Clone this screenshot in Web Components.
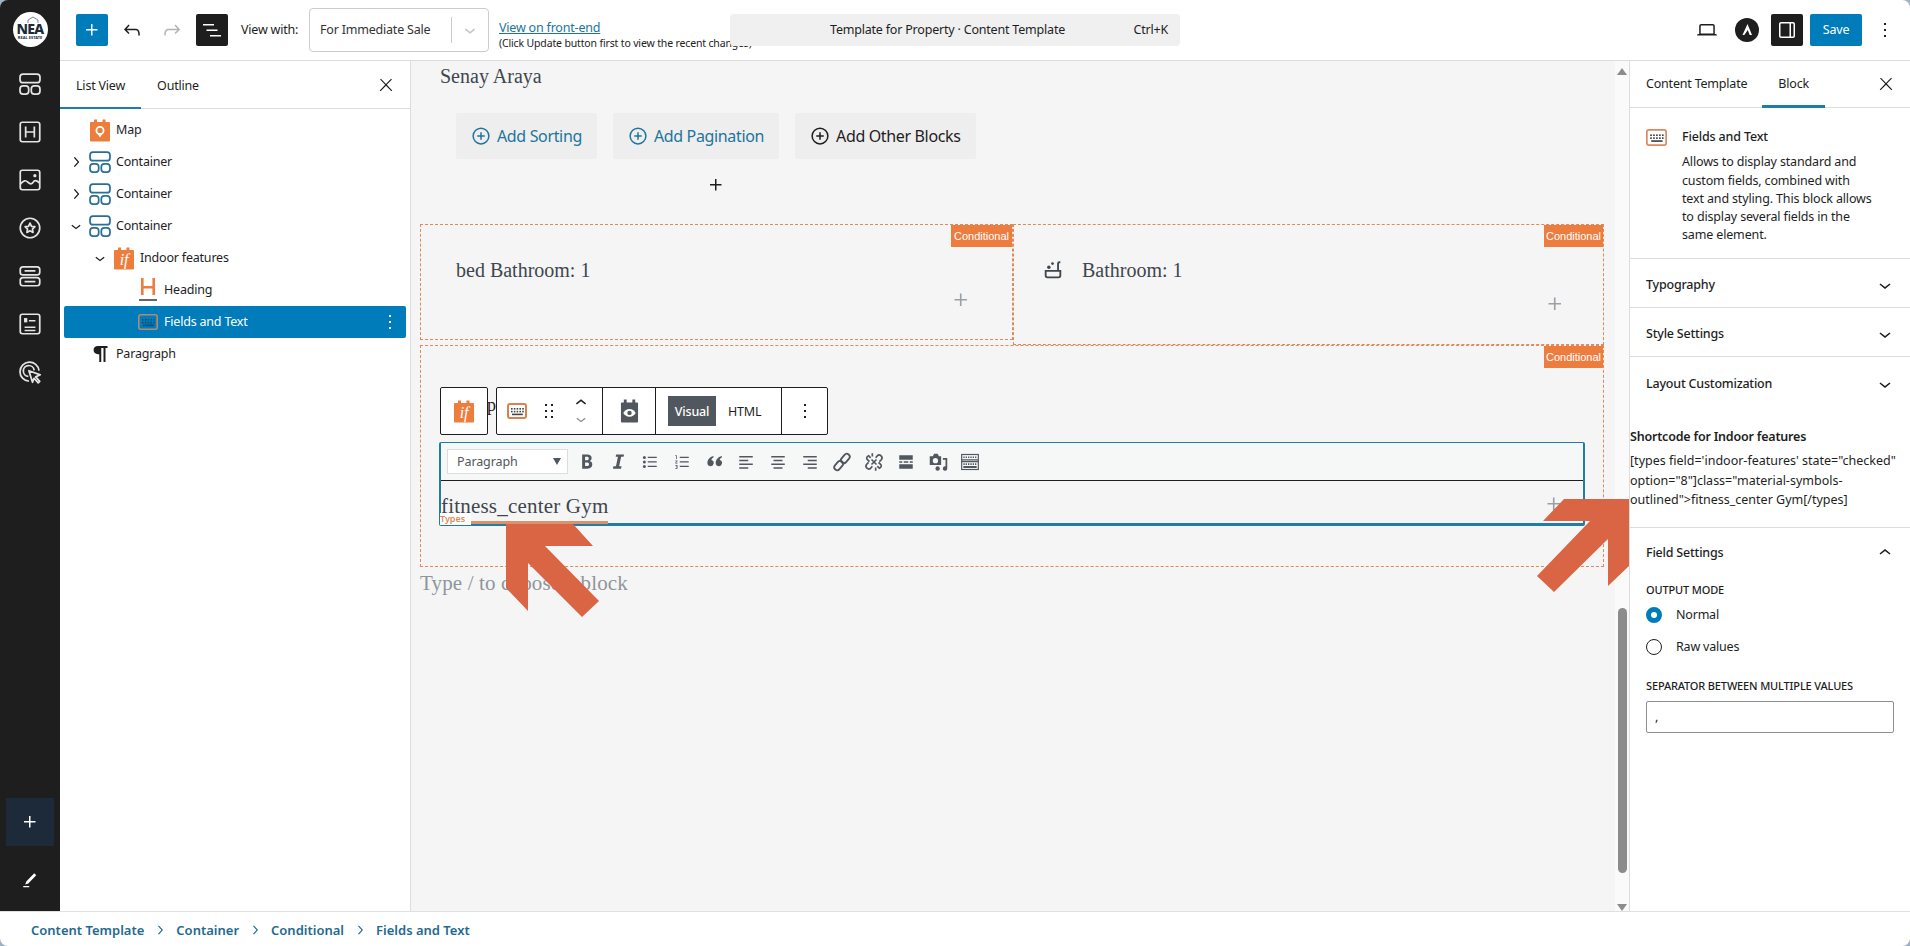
<!DOCTYPE html>
<html lang="en">
<head>
<meta charset="utf-8">
<title>Template for Property</title>
<style>
    html, body { margin: 0; height: 100%; overflow: hidden; background: #9fb3c4; }
    body { font: 12.5px/1.4 "Noto Sans", sans-serif; letter-spacing: -.2px; color: #1e1e1e; }
</style>
</head>
<body>
<editor-app></editor-app>

<script>
const UI_FONT = '"Noto Sans", "Open Sans", sans-serif';
const SERIF_FONT = '"Liberation Serif", "DejaVu Serif", serif';

const toolsetBody = (inner) => `<svg viewBox="0 0 20 24" width="20" height="24"><path fill="#ec7d3c" d="M4 4V1.500h3V4h5.500V1.500h3V4H19a1 1 0 0 1 1 1v17.500a1 1 0 0 1-1 1H1a1 1 0 0 1-1-1V5a1 1 0 0 1 1-1z"/>${inner}</svg>`;

const keyboardGrid = (c) => `<g fill="${c}"><rect x="4" y="5" width="1.600" height="1.600"/><rect x="6.800" y="5" width="1.600" height="1.600"/><rect x="9.600" y="5" width="1.600" height="1.600"/><rect x="12.400" y="5" width="1.600" height="1.600"/><rect x="15.200" y="5" width="1.600" height="1.600"/><rect x="4" y="7.800" width="1.600" height="1.600"/><rect x="6.800" y="7.800" width="1.600" height="1.600"/><rect x="9.600" y="7.800" width="1.600" height="1.600"/><rect x="12.400" y="7.800" width="1.600" height="1.600"/><rect x="15.200" y="7.800" width="1.600" height="1.600"/><rect x="5" y="10.600" width="10.800" height="1.600"/></g>`;

const ICONS = {
    plus: '<path fill="currentColor" d="M11 12.500V17.500H12.500V12.500H17.500V11H12.500V6H11V11H6V12.500H11Z"/>',
    undo: '<path fill="currentColor" d="M18.300 11.700c-.6-.6-1.400-.9-2.300-.9H6.700l2.900-3.300-1.100-1-4.500 5L8.500 16l1-1-2.700-2.700H16c.5 0 .9.2 1.300.5 1 1 1 3.400 1 4.500v.3h1.500v-.2c0-1.500 0-4.300-1.500-5.700z"/>',
    redo: '<path fill="currentColor" d="M15.600 6.500l-1.100 1 2.900 3.300H8c-.9 0-1.700.3-2.300.9-1.400 1.500-1.400 4.200-1.400 5.600v.2h1.500v-.3c0-1.100 0-3.500 1-4.500.3-.3.7-.5 1.300-.5h9.200L14.500 15l1.100 1.100 4.600-4.600-4.600-5z"/>',
    listview: '<path fill="currentColor" d="M3 6h11v1.500H3V6Zm3.500 5.500h11V13h-11v-1.500ZM21 17H10v1.500h11V17Z"/>',
    down: '<path fill="currentColor" d="M17.500 11.600L12 16l-5.500-4.400.9-1.200L12 14l4.500-3.600 1 1.200z"/>',
    up: '<path fill="currentColor" d="M6.500 12.400L12 8l5.500 4.400-.9 1.200L12 10l-4.500 3.600-1-1.200z"/>',
    right: '<path fill="currentColor" d="M10.600 6L9.400 7l4.600 5-4.600 5 1.200 1 5.400-6z"/>',
    close: '<path fill="currentColor" d="M13 11.800l6.100-6.300-1-1-6.100 6.200-6.100-6.200-1 1 6.100 6.300-6.500 6.700 1 1 6.500-6.600 6.500 6.600 1-1z"/>',
    more: '<path fill="currentColor" d="M13 19h-2v-2h2v2zm0-6h-2v-2h2v2zm0-6h-2V5h2v2z"/>',
    drag: '<path fill="currentColor" d="M8 7h2V5H8v2zm0 6h2v-2H8v2zm0 6h2v-2H8v2zm6-14v2h2V5h-2zm0 8h2v-2h-2v2zm0 6h2v-2h-2v2z"/>',
    laptop: '<path fill="currentColor" d="M20.500 16h-.7V8c0-1.100-.9-2-2-2H6.200c-1.100 0-2 .9-2 2v8h-.7c-.8 0-1.500.7-1.500 1.500h20c0-.8-.7-1.500-1.500-1.500zM5.700 8c0-.3.2-.5.5-.5h11.600c.3 0 .5.2.5.5v7.600H5.700V8z"/>',
    toggle: '<path fill="currentColor" d="M18 4H6c-1.100 0-2 .9-2 2v12c0 1.100.9 2 2 2h12c1.100 0 2-.9 2-2V6c0-1.100-.9-2-2-2zm-3.500 14.500H6c-.3 0-.5-.2-.5-.5V6c0-.3.2-.5.5-.5h8.500v13zm4 -.5c0 .3-.2.5-.5.5h-2v-13h2c.3 0 .5.2.5.5v12z"/>',
    container: '<g fill="none" stroke="currentColor" stroke-width="1.600"><rect x="2.800" y="2.800" width="18.400" height="8" rx="2.800"/><rect x="2.800" y="13.800" width="8" height="7.500" rx="2.800"/><rect x="13.200" y="13.800" width="8" height="7.500" rx="2.800"/></g>',
    heading: '<g fill="none" stroke="currentColor" stroke-width="1.600"><rect x="3" y="3" width="18" height="18" rx="2"/><path d="M8 7v10M16 7v10M8 12h8"/></g>',
    image: '<g fill="none" stroke="currentColor" stroke-width="1.600"><rect x="3" y="3" width="18" height="18" rx="2"/><path d="M3 16c3-4 5-4 7-2s4 2 5 0 3-2 6 1"/></g><circle cx="16.500" cy="8" r="1.500" fill="currentColor"/>',
    star: '<circle cx="12" cy="12" r="9" fill="none" stroke="currentColor" stroke-width="1.600"/><path fill="none" stroke="currentColor" stroke-width="1.600" stroke-linejoin="round" d="M12 7.500l1.400 2.900 3.100.4-2.200 2.200.5 3.100-2.800-1.500-2.800 1.500.5-3.100-2.200-2.200 3.100-.4z"/>',
    rows: '<g fill="none" stroke="currentColor" stroke-width="1.600"><rect x="3" y="3.500" width="18" height="7.500" rx="2.500"/><rect x="3" y="13.500" width="18" height="7.500" rx="2.500"/><path d="M7 7.200h10M7 17.200h10"/></g>',
    form: '<g fill="none" stroke="currentColor" stroke-width="1.600"><rect x="3" y="3" width="18" height="18" rx="2"/><path d="M7 15h10M7 18h10M11 9h6"/></g><rect x="6.500" y="6.500" width="3" height="4" fill="currentColor"/>',
    cursor: '<g fill="none" stroke="currentColor" stroke-width="1.600"><path d="M11 20.500a8.800 8.800 0 1 1 9.300-9.800"/><path d="M10.500 16a5 5 0 1 1 5.300-5.500"/><path stroke-linejoin="round" d="M11 10.800l10.500 3.800-4.300 1.900 3.800 4.200-1.400 1.300-3.900-4.200-1.400 3.700z"/></g>',
    pen: '<path fill="currentColor" d="M20.300 5.500l-2.600-2.400L7 14l-1.300 4 4-1.400zM3 20h8v1.500H3z"/>',
    circlePlus: '<g fill="none" stroke="currentColor" stroke-width="2"><circle cx="12" cy="12" r="10.500"/><path d="M12 7v10M7 12h10"/></g>',
    bath: '<path fill="currentColor" d="M3 12h18v6a3 3 0 0 1-3 3H6a3 3 0 0 1-3-3zm2 2v4c0 .7.4 1 1 1h12c.6 0 1-.3 1-1v-4z"/><path fill="currentColor" d="M16.500 12V5a2.500 2.500 0 0 1 2.500-2.500h1v2h-1c-.3 0-.5.2-.5.5v7z"/><circle cx="7.500" cy="9" r="1.900" fill="currentColor"/><circle cx="11.500" cy="5" r="1.500" fill="currentColor"/>',
    pilcrow: '<path fill="currentColor" d="M9.500 2.500H21v2.200h-2.400v17h-2.400v-17h-2.700v17h-2.400v-9.500H9.500c-3 0-5.200-2-5.200-4.900s2.200-4.800 5.200-4.800z"/>',
    bold: '<path fill="currentColor" d="M6.500 3h6.300c3.600 0 5.700 1.600 5.700 4.500 0 2-1.100 3.400-2.900 3.900v.1c2.300.4 3.700 1.900 3.700 4.300 0 3.200-2.300 5.200-6.200 5.200H6.500zm3.700 7.300h2c1.800 0 2.700-.7 2.700-2.200 0-1.400-.9-2-2.600-2h-2.100zm0 3v4.500h2.300c1.900 0 2.800-.8 2.800-2.300 0-1.500-1-2.200-2.900-2.200z"/>',
    italic: '<path fill="currentColor" d="M9 3h10l-.6 3h-3.100l-2.500 12h3l-.6 3H5l.6-3h3.200L11.300 6H8.400z"/>',
    ul: '<g fill="currentColor"><circle cx="4.500" cy="6" r="2"/><circle cx="4.500" cy="12" r="2"/><circle cx="4.500" cy="18" r="2"/><path d="M9 5h12v1.800H9zM9 11h12v1.800H9zM9 17h12v1.800H9z"/></g>',
    ol: '<g fill="currentColor"><path d="M9 5h12v1.800H9zM9 11h12v1.800H9zM9 17h12v1.800H9z"/><path d="M3 3h2v5H4V4H3zM3 10h3v1l-2 2h2v1H3v-1l2-2H3zM3 16h3v5H3v-1h2v-1H4v-1h1v-1H3z"/></g>',
    quote: '<path fill="currentColor" d="M10.500 5C6 6.500 3 9.500 3 14a4 4 0 1 0 5-3.900c.3-1.300 1.300-2.500 3-3.400zM21 5c-4.500 1.500-7.500 4.500-7.500 9a4 4 0 1 0 5-3.900c.3-1.300 1.300-2.500 3-3.400z"/>',
    alignLeft: '<path fill="currentColor" d="M3 4h18v2H3zM3 9h12v2H3zM3 14h18v2H3zM3 19h12v2H3z"/>',
    alignCenter: '<path fill="currentColor" d="M3 4h18v2H3zM6 9h12v2H6zM3 14h18v2H3zM6 19h12v2H6z"/>',
    alignRight: '<path fill="currentColor" d="M3 4h18v2H3zM9 9h12v2H9zM3 14h18v2H3zM9 19h12v2H9z"/>',
    link: '<g fill="none" stroke="currentColor" stroke-width="2.200"><rect x="12.500" y="1.500" width="7" height="12.500" rx="3.500" transform="rotate(40 16 7.700)"/><rect x="4.500" y="10" width="7" height="12.500" rx="3.500" transform="rotate(40 8 16.300)"/></g>',
    unlink: '<g fill="none" stroke="currentColor" stroke-width="2"><path d="M14 7l2-2.500a3.400 3.400 0 0 1 5 4.500l-2.500 2.500M10 17l-2 2.500a3.400 3.400 0 0 1-5-4.500l2.500-2.500M8 7L5.500 4.500a3 3 0 0 0-2 4l3 3M16 17l2.500 2.500a3 3 0 0 0 2-4l-3-3"/><path d="M10 1.500v4M14 18.500v4M9 9l6 6M15 9l-6 6"/></g>',
    hr: '<path fill="currentColor" d="M3 3h18v6H3zM3 15h18v6H3zM3 11h4v2H3zM9 11h6v2H9zM17 11h4v2h-4z"/>',
    media: '<path fill="currentColor" fill-rule="evenodd" d="M2 6h3.500L7 3h4l1.500 3H15v10H2zm6.500 2a3 3 0 1 0 0 6 3 3 0 0 0 0-6z"/><path fill="currentColor" d="M17 8h5v12a2.500 2.500 0 1 1-2-2.400V10h-3z"/><circle cx="11" cy="20" r="2.500" fill="currentColor"/>',
    keys: '<g fill="none" stroke="currentColor" stroke-width="1.400"><rect x="2" y="3" width="20" height="18"/><path d="M2 9.500h20M2 11.500h20" /><path stroke-dasharray="1.600 1.200" stroke-width="2" d="M4 6.300h16M4 14.500h16"/><path stroke-width="2.400" d="M4 18h16"/></g>'
};

// shared icon element, colour comes from the parent through currentColor
class UiIcon extends HTMLElement {
    connectedCallback() {
        if (this.shadowRoot) return;
        const size = this.getAttribute('size') || 24;
        const root = this.attachShadow({ mode: 'open' });
        root.innerHTML = `<style>:host{display:inline-flex;flex:none;line-height:0}</style>
            <svg viewBox="0 0 24 24" width="${size}" height="${size}">${ICONS[this.getAttribute('name')] || ''}</svg>`;
    }
}
customElements.define('ui-icon', UiIcon);

function defineBox(tag, html) {
    const tpl = document.createElement('template');
    tpl.innerHTML = html;
    customElements.define(tag, class extends HTMLElement {
        constructor() {
            super();
            this.attachShadow({ mode: 'open' });
            this.shadowRoot.appendChild(tpl.content.cloneNode(true));
        }
    });
}

defineBox('tool-rail', `
    <style>
        :host { display: flex; flex-direction: column; align-items: center; background: #1e1e1e; color: #e4e4e4; height: 100%; overflow: hidden; }
        .logo { width: 35px; height: 35px; margin-top: 12px; border-radius: 50%; background: #fff; color: #1c2a39; display: flex; flex-direction: column; align-items: center; justify-content: center; font-family: ${UI_FONT}; position: relative; flex: none; }
        .logo b { font-size: 14px; line-height: 12px; font-weight: 800; letter-spacing: -.8px; margin-top: 4px; }
        .logo small { font-size: 4px; line-height: 5px; font-weight: 700; white-space: nowrap; letter-spacing: 0; }
        .logo svg { position: absolute; top: 4px; left: 14px; }
        .tools { display: flex; flex-direction: column; gap: 22px; margin-top: 24px; flex: none; }
        .tools ui-icon { display: flex; }
        .spacer { flex: 1; }
        .add { width: 48px; height: 48px; background: #1d2a3a; display: flex; align-items: center; justify-content: center; color: #fff; flex: none; }
        .pen { margin: 25px 0 22px; color: #fff; }
    </style>
    <div class="logo"><svg width="12" height="7" viewBox="0 0 12 7"><path d="M1 7V4l5-3 5 3v3" fill="none" stroke="#6b89a5" stroke-width="1"/></svg><b>NEA</b><small>REAL ESTATE</small></div>
    <div class="tools">
        <ui-icon name="container" size="26"></ui-icon>
        <ui-icon name="heading" size="26"></ui-icon>
        <ui-icon name="image" size="26"></ui-icon>
        <ui-icon name="star" size="26"></ui-icon>
        <ui-icon name="rows" size="26"></ui-icon>
        <ui-icon name="form" size="26"></ui-icon>
        <ui-icon name="cursor" size="26"></ui-icon>
    </div>
    <div class="spacer"></div>
    <div class="add"><ui-icon name="plus" size="24"></ui-icon></div>
    <ui-icon class="pen" name="pen" size="18"></ui-icon>
`);

defineBox('top-bar', `
    <style>
        :host { display: flex; align-items: center; height: 60px; border-bottom: 1px solid #ddd; background: #fff; padding-left: 16px; font-family: ${UI_FONT}; font-size: 12.5px; color: #1e1e1e; box-sizing: content-box; }
        .sq { width: 32px; height: 32px; border-radius: 2px; display: flex; align-items: center; justify-content: center; flex: none; }
        .blue { background: #007cba; color: #fff; }
        .dark { background: #1e1e1e; color: #fff; }
        .hist { width: 40px; display: flex; justify-content: center; flex: none; }
        .off { color: #b4b4b4; }
        .label { margin-left: 13px; width: 68px; flex: none; white-space: nowrap; }
        .select { width: 180px; height: 44px; box-sizing: border-box; border: 1px solid #ccc; border-radius: 4px; display: flex; align-items: center; padding-left: 10px; flex: none; color: #333; }
        .select i { margin-left: auto; width: 1px; height: 26px; background: #ccc; }
        .select ui-icon { margin: 0 7px 0 7px; color: #c4c4c4; }
        .view { width: 231px; margin-left: 10px; flex: none; white-space: nowrap; padding-top: 10px; }
        .view a { display: block; color: #21759b; text-decoration: underline; font-size: 12.5px; line-height: 16px; }
        .view span { display: block; font-size: 10.5px; line-height: 14px; color: #222; letter-spacing: -.15px; }
        .command { position: relative; width: 450px; height: 32px; background: #f0f0f0; border-radius: 4px; display: flex; align-items: center; padding: 0 12px 0 100px; box-sizing: border-box; flex: none; white-space: nowrap; }
        .command kbd { font: inherit; margin-left: auto; }
        .end { margin-left: auto; display: flex; align-items: center; padding-right: 13px; }
        .astra { width: 24px; height: 24px; margin: 0 12px 0 8px; border-radius: 50%; background: #1e1e1e; display: flex; align-items: center; justify-content: center; }
        .save { width: 52px; height: 32px; margin-left: 7px; background: #007cba; color: #fff; border-radius: 2px; display: flex; align-items: center; justify-content: center; }
        .dots { margin-left: 11px; }
    </style>
    <div class="sq blue"><ui-icon name="plus"></ui-icon></div>
    <div class="hist" style="margin-left:4px"><ui-icon name="undo"></ui-icon></div>
    <div class="hist off"><ui-icon name="redo"></ui-icon></div>
    <div class="sq dark" style="margin-left:4px"><ui-icon name="listview"></ui-icon></div>
    <div class="label">View with:</div>
    <div class="select">For Immediate Sale<i></i><ui-icon name="down" size="22"></ui-icon></div>
    <div class="view"><a>View on front-end</a><span>(Click Update button first to view the recent changes)</span></div>
    <div class="command"><span>Template for Property · Content Template</span><kbd>Ctrl+K</kbd></div>
    <div class="end">
        <div class="hist"><ui-icon name="laptop"></ui-icon></div>
        <div class="astra"><svg width="14" height="14" viewBox="0 0 14 14"><path fill="#fff" d="M7.500 1l4.500 11H9.700L7.800 7 4.300 12H2.500z"/></svg></div>
        <div class="sq dark"><ui-icon name="toggle"></ui-icon></div>
        <div class="save">Save</div>
        <ui-icon class="dots" name="more"></ui-icon>
    </div>
`);

// one row of the block tree
const ROW_ICONS = {
    map: toolsetBody('<circle cx="10" cy="12.500" r="3.600" fill="none" stroke="#fff" stroke-width="1.800"/><path d="M7 15l3 4.500 3-4.500" fill="#fff"/>'),
    indoor: toolsetBody('<text x="10" y="19" font-family="Liberation Serif" font-style="italic" font-size="16" fill="#fff" text-anchor="middle">if</text>'),
    heading: '<svg viewBox="0 0 20 24" width="20" height="24"><path fill="#ec7d3c" d="M3 0h2.600v8h8.800V0H17v17h-2.600V10.500H5.600V17H3z"/><rect x="1" y="21" width="18" height="2" fill="#666"/></svg>',
    fields: `<svg viewBox="0 0 20 16" width="20" height="16"><rect x=".8" y=".8" width="18.400" height="14.400" rx="2" fill="none" stroke="#b08a74" stroke-width="1.600"/>${keyboardGrid('#044c78')}</svg>`,
    container: '<span style="color:#2a6f96;display:flex"><ui-icon name="container" size="26"></ui-icon></span>',
    paragraph: '<span style="color:#1e1e1e;display:flex"><ui-icon name="pilcrow" size="20"></ui-icon></span>'
};

class ListRow extends HTMLElement {
    connectedCallback() {
        if (this.shadowRoot) return;
        const level = Number(this.getAttribute('level') || 0);
        const chevron = this.getAttribute('chevron');
        const selected = this.hasAttribute('selected');
        const root = this.attachShadow({ mode: 'open' });
        root.innerHTML = `
            <style>
                :host { display: flex; align-items: center; height: 32px; margin: 0 4px; border-radius: 2px; padding-left: ${level * 24}px; color: #1e1e1e; }
                :host([selected]) { background: #007cba; color: #fff; }
                .chev { width: 24px; display: flex; justify-content: center; flex: none; }
                .ico { width: 20px; margin: 0 6px 0 2px; display: flex; align-items: center; justify-content: center; flex: none; }
                .dots { margin-left: auto; margin-right: 4px; }
            </style>
            <span class="chev">${chevron ? `<ui-icon name="${chevron}" size="20"></ui-icon>` : ''}</span>
            <span class="ico">${ROW_ICONS[this.getAttribute('icon')]}</span>
            <slot></slot>
            ${selected ? '<ui-icon class="dots" name="more"></ui-icon>' : ''}`;
    }
}
customElements.define('list-row', ListRow);

defineBox('list-panel', `
    <style>
        :host { display: block; background: #fff; border-right: 1px solid #ddd; font-family: ${UI_FONT}; font-size: 12.5px; overflow: hidden; }
        .tabs { display: flex; align-items: center; height: 47px; border-bottom: 1px solid #ddd; position: relative; }
        .tab { padding: 2px 16px 0; height: 48px; display: flex; align-items: center; box-sizing: border-box; }
        .tab.on { box-shadow: inset 0 -2px 0 #1f7ea8; }
        .close { margin-left: auto; margin-right: 14px; }
        .tree { padding-top: 5px; }
    </style>
    <div class="tabs">
        <div class="tab on">List View</div>
        <div class="tab">Outline</div>
        <ui-icon class="close" name="close" size="20"></ui-icon>
    </div>
    <div class="tree">
        <list-row icon="map">Map</list-row>
        <list-row icon="container" chevron="right">Container</list-row>
        <list-row icon="container" chevron="right">Container</list-row>
        <list-row icon="container" chevron="down">Container</list-row>
        <list-row icon="indoor" chevron="down" level="1">Indoor features</list-row>
        <list-row icon="heading" level="2">Heading</list-row>
        <list-row icon="fields" level="2" selected>Fields and Text</list-row>
        <list-row icon="paragraph">Paragraph</list-row>
    </div>
`);

class AddButton extends HTMLElement {
    connectedCallback() {
        if (this.shadowRoot) return;
        const root = this.attachShadow({ mode: 'open' });
        root.innerHTML = `
            <style>
                :host { display: flex; align-items: center; gap: 7px; height: 46px; padding: 0 15px 0 16px; background: #eee; color: #21759b; font: 16px ${UI_FONT}; letter-spacing: -.35px; border-radius: 2px; white-space: nowrap; }
                :host([dark]) { color: #1e1e1e; }
            </style>
            <ui-icon name="circlePlus" size="18"></ui-icon><slot></slot>`;
    }
}
customElements.define('add-button', AddButton);

defineBox('cond-box', `
    <style>
        :host { display: block; position: relative; border: 1px dashed #e08a5c; box-sizing: border-box; }
        .badge { position: absolute; top: 0; right: 0; height: 22px; width: var(--badge-width, 59px); box-sizing: border-box; background: #ed7d3f; color: #fff; font: 11px/22px "Liberation Sans", sans-serif; letter-spacing: 0; text-align: center; white-space: nowrap; }
    </style>
    <div class="badge">Conditional</div>
    <slot></slot>
`);

defineBox('block-toolbars', `
    <style>
        :host { display: flex; gap: 8px; height: 48px; font-family: ${UI_FONT}; font-size: 12.5px; letter-spacing: -.2px; color: #1e1e1e; position: relative; }
        .bar { border: 1px solid #1e1e1e; border-radius: 2px; background: #fff; display: flex; align-items: stretch; box-sizing: border-box; position: relative; }
        .one { width: 48px; justify-content: center; align-items: center; }
        .glimpse { position: absolute; left: 47px; top: 6px; font: 18px/24px ${SERIF_FONT}; letter-spacing: 0; color: #1e1e1e; }
        .main { width: 332px; }
        .part { display: flex; align-items: center; border-left: 1px solid #1e1e1e; }
        .part:first-child { border-left: 0; }
        .movers { display: flex; flex-direction: column; align-items: center; width: 20px; height: 40px; justify-content: center; }
        .movers ui-icon { height: 16px; align-items: center; }
        .movers .off { color: #8a8a8a; }
        .visual { width: 48px; height: 30px; margin-left: 12px; background: #50575e; color: #fff; font-weight: 500; font-size: 12.5px; display: flex; align-items: center; justify-content: center; }
        .html { margin-left: 12px; width: 53px; }
    </style>
    <span class="glimpse">p</span>
    <div class="bar one">${ROW_ICONS.indoor}</div>
    <div class="bar main">
        <div class="part" style="width:105px;padding-left:10px;box-sizing:border-box">
            <svg viewBox="0 0 20 16" width="20" height="16"><rect x="1" y="1" width="18" height="14" rx="2" fill="#fff" stroke="#d9824f" stroke-width="2"/>${keyboardGrid('#444')}</svg>
            <ui-icon name="drag" size="24" style="margin-left:10px"></ui-icon>
            <div class="movers" style="margin-left:10px"><ui-icon name="up" size="22"></ui-icon><ui-icon class="off" name="down" size="20"></ui-icon></div>
        </div>
        <div class="part" style="width:52px;justify-content:center">
            <svg viewBox="0 0 20 26" width="19" height="26"><path fill="#50575e" d="M4 4V1h3v3h6V1h3v3h2a1 1 0 0 1 1 1v19a1 1 0 0 1-1 1H2a1 1 0 0 1-1-1V5a1 1 0 0 1 1-1z"/><path fill="#fff" d="M10 11c3 0 5.500 2 6.500 4-1 2-3.500 4-6.500 4s-5.500-2-6.500-4c1-2 3.500-4 6.500-4z"/><circle cx="10" cy="15" r="2.300" fill="#50575e"/></svg>
        </div>
        <div class="part" style="width:125px"><div class="visual">Visual</div><div class="html">HTML</div></div>
        <div class="part" style="flex:1;justify-content:center"><ui-icon name="more"></ui-icon></div>
    </div>
`);

defineBox('mce-bar', `
    <style>
        :host { display: flex; align-items: center; height: 37px; border-bottom: 1px solid #1e1e1e; padding-left: 6px; color: #50575e; font-family: ${UI_FONT}; font-size: 12.5px; letter-spacing: -.1px; background: #f6f7f7; }
        .format { width: 121px; height: 25px; box-sizing: border-box; background: #fff; border: 1px solid #ddd; display: flex; align-items: center; padding: 0 6px 0 9px; margin-right: 2px; }
        .format i { margin-left: auto; width: 0; height: 0; border: 4px solid transparent; border-top: 7px solid #50575e; border-bottom: 0; }
        ui-icon { width: 32px; justify-content: center; }
    </style>
    <div class="format">Paragraph<i></i></div>
    <ui-icon name="bold" size="19"></ui-icon>
    <ui-icon name="italic" size="19"></ui-icon>
    <ui-icon name="ul" size="18"></ui-icon>
    <ui-icon name="ol" size="18"></ui-icon>
    <ui-icon name="quote" size="19"></ui-icon>
    <ui-icon name="alignLeft" size="18"></ui-icon>
    <ui-icon name="alignCenter" size="18"></ui-icon>
    <ui-icon name="alignRight" size="18"></ui-icon>
    <ui-icon name="link" size="20"></ui-icon>
    <ui-icon name="unlink" size="20"></ui-icon>
    <ui-icon name="hr" size="18"></ui-icon>
    <ui-icon name="media" size="21"></ui-icon>
    <ui-icon name="keys" size="20"></ui-icon>
`);

defineBox('canvas-area', `
    <style>
        :host { display: grid; grid-template-columns: 1fr 14px; background: #f5f5f5; position: relative; overflow: hidden; font: 20px ${SERIF_FONT}; letter-spacing: 0; color: #40464d; }
        .doc { padding-left: 9px; width: 1184px; }
        p { margin: 0; white-space: nowrap; }
        .author { margin-left: 20px; height: 30px; line-height: 30px; font-size: 20px; }
        .buttons { display: flex; gap: 16px; margin: 22px 0 0 36px; }
        .add { width: 520px; margin-left: 36px; display: flex; justify-content: center; height: 65px; padding-top: 14px; box-sizing: border-box; color: #1e1e1e; }
        .pair { display: flex; height: 121px; align-items: flex-start; }
        .pair cond-box:first-child { width: 593px; height: 116px; --badge-width: 61px; }
        .pair cond-box:last-child { width: 591px; height: 121px; }
        .line { display: flex; align-items: center; height: 28px; margin: 31px 0 0 35px; }
        .line ui-icon { margin: 0 18px 0 1px; color: #40464d; }
        .grey-add { display: flex; justify-content: flex-end; color: #9aa0a6; }
        .feature { height: 222px; padding: 41px 0 0 19px; }
        .editor { width: 1146px; height: 84px; margin: 7px 0 0 -1px; border: 2px solid #1f7ea8; border-top-width: 1px; border-bottom-width: 3px; border-radius: 2px; box-sizing: border-box; position: relative; }
        .text { display: flex; align-items: center; height: 42px; padding-top: 8px; box-sizing: border-box; font-size: 21px; letter-spacing: .200px; }
        .tag { position: absolute; left: -1px; bottom: -2px; height: 12px; background: #fff; color: #e08a5c; font: 600 9px/12px ${UI_FONT}; letter-spacing: 0; padding: 0 4px 0 0; width: 27px; }
        .under { position: absolute; left: 30px; bottom: -1px; width: 137px; height: 3px; background: #d9926c; }
        .editor > ui-icon { position: absolute; right: 16px; bottom: 6px; color: #9aa0a6; }
        .hint { margin: 2px 0 0 0; height: 28px; line-height: 28px; color: #8f959b; font-size: 21px; letter-spacing: .150px; }
        .scroll { background: #fafafa; position: relative; display: flex; flex-direction: column; align-items: center; color: #8c8c8c; }
        .arrow-up, .arrow-down { width: 0; height: 0; border: 5px solid transparent; flex: none; }
        .arrow-up { border-bottom: 7px solid #8c8c8c; border-top: 0; margin-top: 7px; }
        .arrow-down { border-top: 7px solid #8c8c8c; border-bottom: 0; }
        .thumb { width: 9px; height: 265px; margin-top: auto; background: #8c8c8c; border-radius: 5px; }
        .gap { height: 31px; flex: none; }
        .marks { position: absolute; inset: 0; width: 100%; height: 100%; pointer-events: none; }
    </style>
    <div class="doc">
        <p class="author">Senay Araya</p>
        <div class="buttons">
            <add-button>Add Sorting</add-button>
            <add-button>Add Pagination</add-button>
            <add-button dark>Add Other Blocks</add-button>
        </div>
        <div class="add"><ui-icon name="plus" size="24"></ui-icon></div>
        <div class="pair">
            <cond-box>
                <p class="line">bed Bathroom: 1</p>
                <div class="grey-add" style="margin-top:3px;padding-right:38px"><ui-icon name="plus" size="26"></ui-icon></div>
            </cond-box>
            <cond-box>
                <p class="line" style="margin-left:27px"><ui-icon name="bath" size="22"></ui-icon>Bathroom: 1</p>
                <div class="grey-add" style="margin-top:7px;padding-right:35px"><ui-icon name="plus" size="26"></ui-icon></div>
            </cond-box>
        </div>
        <cond-box class="feature">
            <block-toolbars></block-toolbars>
            <div class="editor">
                <mce-bar></mce-bar>
                <p class="text">fitness_center Gym</p>
                <span class="tag">Types</span><span class="under"></span>
                <ui-icon name="plus" size="26"></ui-icon>
            </div>
        </cond-box>
        <p class="hint">Type / to choose a block</p>
    </div>
    <div class="scroll">
        <i class="arrow-up"></i>
        <div class="thumb"></div>
        <div class="gap"></div>
        <i class="arrow-down"></i>
    </div>
    <svg class="marks" viewBox="411 61 1218 850" preserveAspectRatio="none">
        <polygon fill="#d96544" points="506,524 573,524 593,546 545,546 599,601 582,617 528,563 528,611 506,588"/>
        <polygon fill="#d96544" points="1564,499 1630,499 1630,565 1608,586 1608,539 1554,592 1537,576 1590,521 1543,521"/>
    </svg>
`);

class PanelRow extends HTMLElement {
    connectedCallback() {
        if (this.shadowRoot) return;
        const root = this.attachShadow({ mode: 'open' });
        root.innerHTML = `
            <style>
                :host { display: flex; align-items: center; justify-content: space-between; height: 44px; padding: 4px 16px 0; border-bottom: 1px solid #ddd; font-weight: 500; font-size: 12.5px; color: #1e1e1e; }
                :host([plain]) { border-bottom: 0; height: 54px; padding-top: 0; }
                ui-icon { margin-right: -3px; }
            </style>
            <slot></slot><ui-icon name="${this.hasAttribute('open') ? 'up' : 'down'}"></ui-icon>`;
    }
}
customElements.define('panel-row', PanelRow);

defineBox('settings-panel', `
    <style>
        :host { display: block; background: #fff; border-left: 1px solid #ddd; font-family: ${UI_FONT}; font-size: 12.5px; color: #1e1e1e; overflow: hidden; }
        .tabs { display: flex; align-items: center; height: 46px; border-bottom: 1px solid #ddd; }
        .tab { padding: 0 16px; height: 47px; display: flex; align-items: center; box-sizing: border-box; white-space: nowrap; }
        .tab.on { box-shadow: inset 0 -3px 0 #1f7ea8; margin-left: -1px; }
        .close { margin-left: auto; margin-right: 14px; }
        .card { display: grid; grid-template-columns: 36px 1fr; padding: 19px 16px 13px; height: 151px; box-sizing: border-box; border-bottom: 1px solid #ddd; letter-spacing: -.15px; }
        .card svg { margin-top: 2px; }
        .card b { font-weight: 500; line-height: 20px; }
        .card p { grid-column: 2; margin: 6px 0 0; line-height: 18.300px; }
        .short { padding-bottom: 17px; border-bottom: 1px solid #ddd; }
        .short b { display: block; font-weight: 600; line-height: 20px; white-space: nowrap; }
        .short p { margin: 4px 0 0; line-height: 19.500px; white-space: nowrap; letter-spacing: 0; }
        .fields { padding: 0 16px; }
        .cap { font-size: 11px; font-weight: 500; line-height: 16px; letter-spacing: -.15px; text-transform: uppercase; white-space: nowrap; }
        .radio { display: flex; align-items: center; gap: 14px; height: 32px; }
        .radio i { width: 16px; height: 16px; border-radius: 50%; border: 1px solid #1e1e1e; box-sizing: border-box; background: #fff; }
        .radio i.on { border: 5px solid #007cba; }
        .input { width: 248px; height: 32px; box-sizing: border-box; border: 1px solid #8c8f94; border-radius: 2px; margin-top: 7px; padding: 6px 8px; line-height: 18px; }
    </style>
    <div class="tabs">
        <div class="tab">Content Template</div>
        <div class="tab on">Block</div>
        <ui-icon class="close" name="close" size="20"></ui-icon>
    </div>
    <div class="card">
        <svg viewBox="0 0 20 16" width="21" height="17"><rect x=".8" y=".8" width="18.400" height="14.400" rx="2" fill="none" stroke="#d98a5c" stroke-width="1.600"/>${keyboardGrid('#444')}</svg>
        <b>Fields and Text</b>
        <p>Allows to display standard and<br>custom fields, combined with<br>text and styling. This block allows<br>to display several fields in the<br>same element.</p>
    </div>
    <panel-row>Typography</panel-row>
    <panel-row>Style Settings</panel-row>
    <panel-row plain>Layout Customization</panel-row>
    <div class="short" style="margin-top:16px">
        <b>Shortcode for Indoor features</b>
        <p>[types field='indoor-features' state="checked"<br>option="8"]class="material-symbols-<br>outlined"&gt;fitness_center Gym[/types]</p>
    </div>
    <panel-row open plain style="height:50px">Field Settings</panel-row>
    <div class="fields">
        <div class="cap" style="margin-top:4px">Output mode</div>
        <div class="radio" style="margin-top:1px"><i class="on"></i>Normal</div>
        <div class="radio"><i></i>Raw values</div>
        <div class="cap" style="margin-top:15px">Separator between multiple values</div>
        <div class="input">,</div>
    </div>
`);

defineBox('crumb-bar', `
    <style>
        :host { display: flex; align-items: center; height: 35px; box-sizing: border-box; border-top: 1px solid #e0e0e0; background: #fff; padding: 1px 0 0 31px; font: 600 13px ${UI_FONT}; letter-spacing: 0; color: #1f6a8f; }
        ui-icon { margin: 0 7px; color: #1f6a8f; }
    </style>
    <span>Content Template</span><ui-icon name="right" size="18"></ui-icon>
    <span>Container</span><ui-icon name="right" size="18"></ui-icon>
    <span>Conditional</span><ui-icon name="right" size="18"></ui-icon>
    <span>Fields and Text</span>
`);

defineBox('editor-app', `
    <style>
        :host { display: grid; grid-template-columns: 60px 351px 1fr 281px; grid-template-rows: 61px 850px 35px; width: 1910px; height: 946px; overflow: hidden; border-radius: 8px; }
        tool-rail { grid-column: 1; grid-row: 1 / 3; }
        top-bar { grid-column: 2 / 5; grid-row: 1; }
        list-panel { grid-column: 2; grid-row: 2; }
        canvas-area { grid-column: 3; grid-row: 2; }
        settings-panel { grid-column: 4; grid-row: 2; }
        crumb-bar { grid-column: 1 / 5; grid-row: 3; }
    </style>
    <tool-rail></tool-rail>
    <top-bar></top-bar>
    <list-panel></list-panel>
    <canvas-area></canvas-area>
    <settings-panel></settings-panel>
    <crumb-bar></crumb-bar>
`);
</script>
</body>
</html>
